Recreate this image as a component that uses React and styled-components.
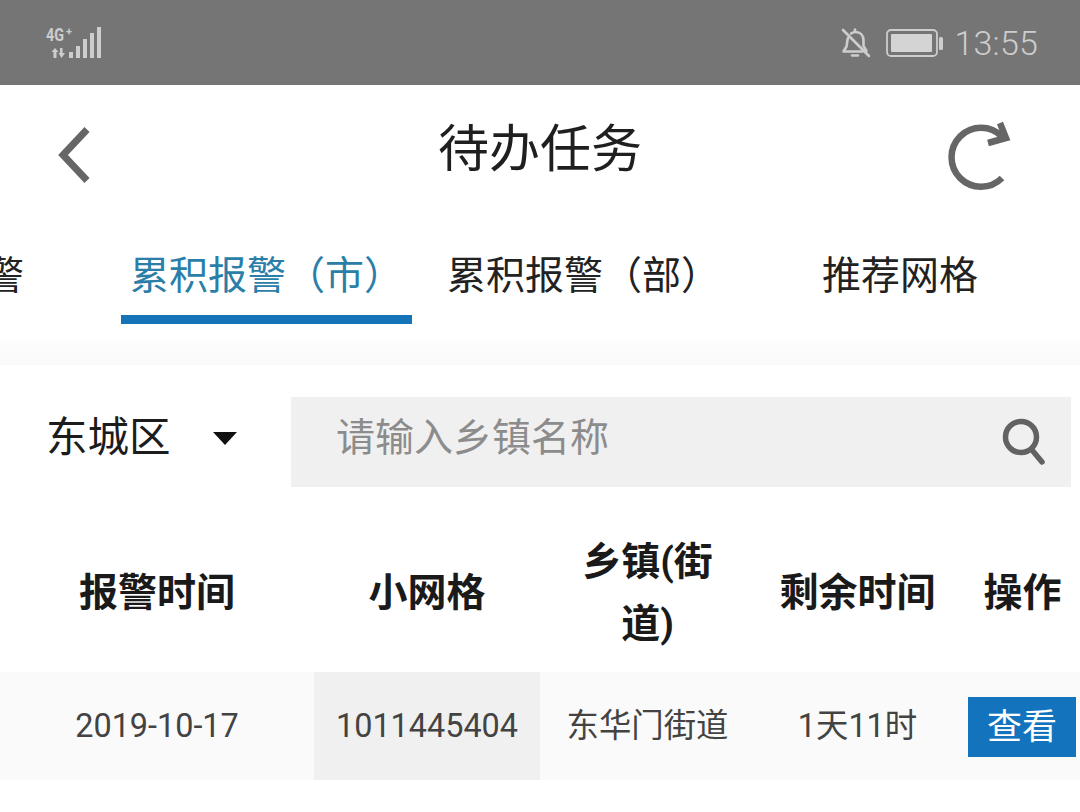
import styled, { createGlobalStyle } from 'styled-components';

const GlobalStyle = createGlobalStyle`
  html, body {
    margin: 0;
    background: #fff;
  }
  body {
    font-family: Roboto, "Noto Sans CJK SC", sans-serif;
  }
`;

const Page = styled.div`
  width: 1080px;
  height: 812px;
  overflow: hidden;
  display: flex;
  flex-direction: column;
  background: #fff;
`;

const StatusBar = styled.div`
  height: 85px;
  flex: none;
  background: #757575;
  display: flex;
  justify-content: space-between;
  align-items: center;
  padding: 0 42px 0 45px;
  box-sizing: border-box;
  color: #cdcdcd;
`;

const StatusGroup = styled.div`
  display: flex;
  align-items: center;
  gap: ${(p) => p.$gap || 0}px;
`;

const Clock = styled.span`
  font-size: 34px;
  font-weight: 300;
  letter-spacing: 0.2px;
`;

const Header = styled.header`
  height: 130px;
  flex: none;
  display: grid;
  grid-template-columns: 384px 204px 1fr;
  align-items: center;
  padding: 0 68px 0 54px;
  box-sizing: border-box;
`;

const Title = styled.h1`
  margin: 0;
  font-size: 51px;
  line-height: 60px;
  font-weight: 400;
  white-space: nowrap;
  color: #1f1f1f;
`;

const IconButton = styled.div`
  height: 80px;
  padding-top: 9px;
  box-sizing: border-box;
  display: flex;
  align-items: center;
  justify-content: ${(p) => p.$align || 'flex-start'};
`;

const TabStrip = styled.nav`
  height: 124px;
  flex: none;
  display: flex;
  justify-content: flex-end;
  overflow: hidden;
`;

const Tab = styled.div`
  flex: none;
  width: ${(p) => p.$w}px;
  height: 109px;
  padding-top: 36px;
  box-sizing: border-box;
  display: flex;
  justify-content: ${(p) => p.$align || 'flex-start'};
  padding-left: ${(p) => p.$pad || 0}px;
  padding-right: ${(p) => p.$padRight || 0}px;
  font-size: 39px;
  line-height: 50px;
  white-space: nowrap;
  color: ${(p) => (p.$active ? '#2a7ea8' : '#222')};
  border-bottom: 9px solid ${(p) => (p.$active ? '#1574b8' : 'transparent')};
`;

const Band = styled.div`
  height: 26px;
  flex: none;
  background: linear-gradient(#fdfdfd, #fafafa);
`;

const FilterRow = styled.div`
  height: 154px;
  flex: none;
  display: flex;
  align-items: center;
  padding: 0 9px 0 46px;
  box-sizing: border-box;
`;

const Picker = styled.div`
  width: 245px;
  flex: none;
  display: flex;
  align-items: center;
  padding-bottom: 16px;
  box-sizing: border-box;
  font-size: 41.5px;
  color: #1c1c1c;
`;

const Caret = styled.span`
  width: 0;
  height: 0;
  margin: 8px 0 0 42px;
  border-left: 12px solid transparent;
  border-right: 12px solid transparent;
  border-top: 13px solid #111;
`;

const SearchBox = styled.div`
  flex: 1;
  height: 90px;
  background: #f0f0f0;
  display: flex;
  align-items: center;
  justify-content: space-between;
  padding: 0 24px 0 45px;
  box-sizing: border-box;
`;

const Placeholder = styled.span`
  margin-bottom: 16px;
  font-size: 39px;
  color: #8c8c8c;
`;

const Grid = styled.div`
  display: grid;
  grid-template-columns: 314px 226px 215px 205px 120px;
`;

const HeadRow = styled(Grid)`
  height: 153px;
  flex: none;
  align-items: center;
  padding-bottom: 6px;
  box-sizing: border-box;
`;

const HeadCell = styled.div`
  font-size: 39px;
  line-height: 62px;
  font-weight: 700;
  text-align: center;
  color: #1a1a1a;
  padding: ${(p) => (p.$wrap ? '0 30px' : '0')};
  padding-left: ${(p) => (p.$last ? '5px' : undefined)};
`;

const BodyRow = styled(Grid)`
  height: 108px;
  flex: none;
  background: #fafafa;
`;

const Cell = styled.div`
  display: flex;
  align-items: center;
  justify-content: ${(p) => (p.$action ? 'flex-start' : 'center')};
  padding-left: ${(p) => (p.$action ? '8px' : '0')};
  padding-top: ${(p) => (p.$action ? '2px' : '0')};
  padding-bottom: ${(p) => (p.$cjk ? '7px' : '0')};
  font-size: 32.4px;
  color: #434343;
  background: ${(p) => (p.$hl ? '#f0f0f0' : 'transparent')};
`;

const ViewButton = styled.button`
  width: 108px;
  height: 60px;
  padding: 0 0 7px;
  border: none;
  background: #1374bd;
  color: #fff;
  font-family: inherit;
  font-size: 35px;
`;

const SignalIcon = () => (
  <svg width="58" height="36" viewBox="0 0 58 36">
    <text x="1" y="16" fontFamily="Roboto, sans-serif" fontSize="18" fontWeight="700" fill="#cdcdcd">
      <tspan textLength="18" lengthAdjust="spacingAndGlyphs">4G</tspan>
      <tspan dx="2" dy="-6" fontSize="11">+</tspan>
    </text>
    <g fill="#cdcdcd">
      <path d="M10 23l3.500 4h-2v6h-3v-6h-2z" />
      <path d="M15 23h2.500v5h2.500l-3.500 5-3-5h1.500z" />
      <rect x="24" y="27" width="4" height="6" />
      <rect x="31" y="21" width="4" height="12" />
      <rect x="38" y="14" width="4" height="19" />
      <rect x="45" y="8" width="4" height="25" />
      <rect x="52" y="2" width="4" height="31" />
    </g>
  </svg>
);

const BellOffIcon = () => (
  <svg width="35" height="32" viewBox="0 0 35 32" fill="none" stroke="#cdcdcd" strokeWidth="2.600" strokeLinecap="round" strokeLinejoin="round">
    <path d="M7 11c-1 3-1 6-1.500 8.500L2.500 24.500h19" />
    <path d="M10 6.500C11.500 5.500 12.500 5 14.500 5c5 0 8 3.500 8 8.500V19l3 5" />
    <path d="M14 2.500v2" />
    <path d="M11 28.500h6" />
    <path d="M2 3l26 26" />
  </svg>
);

const BatteryIcon = () => (
  <svg width="58" height="28" viewBox="0 0 58 28" fill="none">
    <rect x="1" y="1" width="50" height="26" rx="4" stroke="#cdcdcd" strokeWidth="1.800" />
    <rect x="5" y="5" width="41" height="18" rx="1" fill="#d4d4d4" />
    <rect x="53" y="8" width="4" height="13" rx="1.500" fill="#cdcdcd" />
  </svg>
);

const BackIcon = () => (
  <svg width="40" height="60" viewBox="0 0 40 60" fill="none" stroke="#666" strokeWidth="7">
    <path d="M33 4.500 L9 30 L33 55.500" />
  </svg>
);

const RefreshIcon = () => (
  <svg width="64" height="72" viewBox="0 0 64 72" fill="none" stroke="#666" strokeWidth="6.500">
    <path d="M54 17.500 A 29.500 29.500 0 1 0 54 59" />
    <path d="M52 4 L58 19 L40 24" />
  </svg>
);

const SearchIcon = () => (
  <svg width="46" height="50" viewBox="0 0 46 50" fill="none" stroke="#626262" strokeWidth="5.500" strokeLinecap="round">
    <circle cx="20" cy="20" r="15.500" />
    <path d="M31 33 L41 45" />
  </svg>
);

const App = () => {
  return (
    <Page>
      <GlobalStyle />
      <StatusBar>
        <StatusGroup>
          <SignalIcon />
        </StatusGroup>
        <StatusGroup $gap={10}>
          <BellOffIcon />
          <BatteryIcon />
          <Clock>13:55</Clock>
        </StatusGroup>
      </StatusBar>
      <Header>
        <IconButton>
          <BackIcon />
        </IconButton>
        <Title>待办任务</Title>
        <IconButton $align="flex-end">
          <RefreshIcon />
        </IconButton>
      </Header>
      <TabStrip>
        <Tab $w={200} $align="flex-end" $padRight={97}>累积报警</Tab>
        <Tab $w={291} $pad={9} $active>累积报警（市）</Tab>
        <Tab $w={338} $pad={35}>累积报警（部）</Tab>
        <Tab $w={330} $pad={72}>推荐网格</Tab>
      </TabStrip>
      <Band />
      <FilterRow>
        <Picker>
          东城区
          <Caret />
        </Picker>
        <SearchBox>
          <Placeholder>请输入乡镇名称</Placeholder>
          <SearchIcon />
        </SearchBox>
      </FilterRow>
      <HeadRow>
        <HeadCell>报警时间</HeadCell>
        <HeadCell>小网格</HeadCell>
        <HeadCell $wrap>乡镇(街道)</HeadCell>
        <HeadCell>剩余时间</HeadCell>
        <HeadCell $last>操作</HeadCell>
      </HeadRow>
      <BodyRow>
        <Cell>2019-10-17</Cell>
        <Cell $hl>1011445404</Cell>
        <Cell $cjk>东华门街道</Cell>
        <Cell $cjk>1天11时</Cell>
        <Cell $action>
          <ViewButton>查看</ViewButton>
        </Cell>
      </BodyRow>
    </Page>
  );
};

export default App;
